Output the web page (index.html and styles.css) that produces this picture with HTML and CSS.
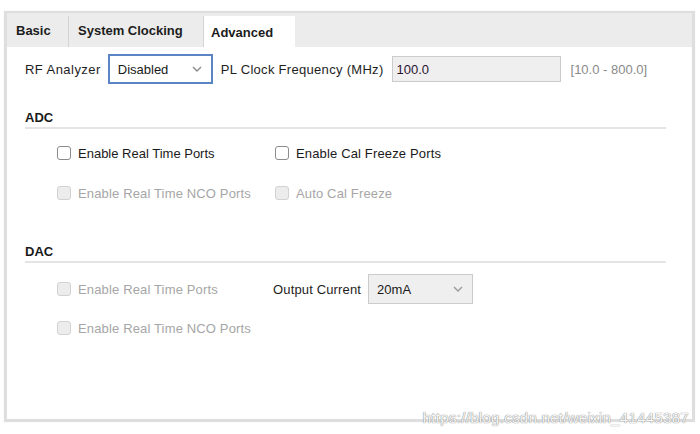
FILE: index.html
```html
<!DOCTYPE html>
<html>
<head>
<meta charset="utf-8">
<link rel="stylesheet" href="styles.css">
</head>
<body>
<div class="panel">
  <div class="tabs">
    <div class="tab tab-basic">Basic</div>
    <div class="tab tab-sys">System Clocking</div>
    <div class="tab tab-adv active">Advanced</div>
  </div>
  <div class="content">
    <div class="toprow">
      <span class="label rf">RF Analyzer</span>
      <div class="select select-blue">
        <span>Disabled</span>
        <svg class="chev" width="10" height="6" viewBox="0 0 10 6"><path d="M1 1 L5 5 L9 1" fill="none" stroke="#8a8a8a" stroke-width="1.4"/></svg>
      </div>
      <span class="label pl">PL Clock Frequency (MHz)</span>
      <div class="textbox">100.0</div>
      <span class="range">[10.0 - 800.0]</span>
    </div>

    <div class="section adc">
      <div class="heading">ADC</div>
      <div class="grid">
        <label class="cb"><span class="box"></span><span>Enable Real Time Ports</span></label>
        <label class="cb"><span class="box"></span><span class="spaced">Enable Cal Freeze Ports</span></label>
        <label class="cb disabled"><span class="box"></span><span class="spaced">Enable Real Time NCO Ports</span></label>
        <label class="cb disabled"><span class="box"></span><span class="spaced">Auto Cal Freeze</span></label>
      </div>
    </div>

    <div class="section dac">
      <div class="heading">DAC</div>
      <div class="dacgrid">
        <label class="cb disabled"><span class="box"></span><span class="spaced">Enable Real Time Ports</span></label>
        <div class="outcur">
          <span class="label spaced">Output Current</span>
          <div class="select select-gray">
            <span>20mA</span>
            <svg class="chev" width="10" height="6" viewBox="0 0 10 6"><path d="M1 1 L5 5 L9 1" fill="none" stroke="#9a9a9a" stroke-width="1.4"/></svg>
          </div>
        </div>
        <label class="cb disabled"><span class="box"></span><span class="spaced">Enable Real Time NCO Ports</span></label>
      </div>
    </div>
  </div>
  <div class="watermark">https://blog.csdn.net/weixin_41445387</div>
</div>
</body>
</html>
```

FILE: styles.css
```css
* { box-sizing: border-box; }
html, body {
  margin: 0;
  padding: 0;
  background: #ffffff;
}
body {
  font-family: "Liberation Sans", Arial, sans-serif;
  font-size: 13px;
  color: #1a1a1a;
  width: 700px;
  height: 434px;
  overflow: hidden;
}
.panel {
  position: relative;
  margin: 11px 0 0 4px;
  width: 691px;
  height: 411px;
  border: 3px solid #dedede;
  border-top-width: 2px;
  background: #fff;
  box-shadow: 0 0 1px #eee;
}
.tabs {
  display: flex;
  height: 34px;
  background: #ececec;
}
.tab {
  font-weight: bold;
  font-size: 13px;
  color: #1c1c1c;
  display: flex;
  align-items: center;
  margin-top: 3px;
  height: 31px;
}
.tab-basic {
  width: 62px;
  padding-left: 9px;
  border-right: 1px solid #d4d4d4;
  padding-bottom: 2px;
}
.tab-sys {
  width: 135px;
  padding-left: 9px;
  border-right: 1px solid #d4d4d4;
  padding-bottom: 2px;
}
.tab-adv {
  width: 91px;
  padding-left: 7px;
  background: #fff;
  padding-top: 1px;
}
.content {
  padding: 7px 0 0 0;
}
.toprow {
  display: flex;
  align-items: center;
  height: 30px;
}
.label {
  color: #1e1e1e;
}
.spaced {
  letter-spacing: 0.15px;
}
.rf {
  margin-left: 18px;
  margin-right: 7px;
  letter-spacing: 0.45px;
}
.select {
  display: flex;
  align-items: center;
  justify-content: space-between;
  padding: 0 9px 0 8px;
}
.select-blue {
  width: 105px;
  height: 30px;
  border: 2px solid #5b84c4;
  background: #fff;
}
.pl {
  margin-left: 8px;
  margin-right: 8px;
  letter-spacing: 0.3px;
}
.textbox {
  width: 169px;
  height: 26px;
  background: #efefef;
  border: 1px solid #cbcbcb;
  padding: 5px 0 0 4px;
  color: #2a1230;
}
.range {
  margin-left: 10px;
  color: #8a8a8a;
}
.section {
  margin-left: 18px;
  margin-right: 26px;
}
.adc { margin-top: 26px; }
.dac { margin-top: 43px; }
.heading {
  font-weight: bold;
  font-size: 13px;
  padding-bottom: 5px;
  border-bottom: 2px solid #e4e4e4;
  height: 19px;
}
.grid {
  display: grid;
  grid-template-columns: 218px auto;
  row-gap: 24px;
  padding: 16px 0 0 32px;
}
.cb {
  display: flex;
  align-items: center;
  height: 16px;
  white-space: nowrap;
}
.box {
  width: 14px;
  height: 14px;
  border: 1.5px solid #8c8c8c;
  border-radius: 3px;
  background: #fff;
  margin-right: 7px;
  flex: none;
}
.cb.disabled { color: #a6a6a6; }
.cb.disabled .box {
  border-color: #d2d2d2;
  background: #ececec;
}
.dacgrid {
  display: grid;
  grid-template-columns: 216px auto;
  grid-template-rows: 30px 30px;
  row-gap: 9px;
  padding: 11px 0 0 32px;
  align-items: center;
}
.outcur {
  display: flex;
  align-items: center;
}
.outcur .label {
  margin-right: 7px;
}
.select-gray {
  width: 105px;
  height: 30px;
  border: 1px solid #cbcbcb;
  background: #efefef;
}
.watermark {
  position: absolute;
  right: 3px;
  bottom: -7px;
  font-size: 15px;
  color: #f6f6f6;
  letter-spacing: 0.3px;
  text-shadow: 0 0 1px #8a8a8a, 0 0 1px #8a8a8a;
}
```
